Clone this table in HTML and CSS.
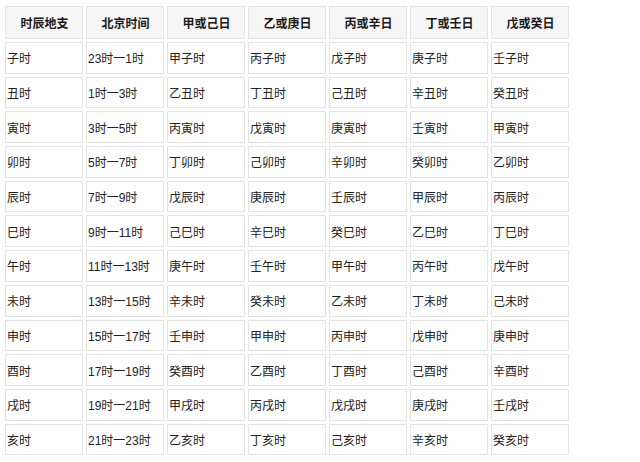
FILE: index.html
```html
<!DOCTYPE html>
<html lang="zh">
<head>
<meta charset="utf-8">
<title>时辰地支</title>
<link rel="stylesheet" href="styles.css">
</head>
<body>
<table class="chart">
<thead>
<tr><th>时辰地支</th><th>北京时间</th><th>甲或己日</th><th>乙或庚日</th><th>丙或辛日</th><th>丁或壬日</th><th>戊或癸日</th></tr>
</thead>
<tbody>
<tr><td>子时</td><td>23时一1时</td><td>甲子时</td><td>丙子时</td><td>戊子时</td><td>庚子时</td><td>壬子时</td></tr>
<tr><td>丑时</td><td>1时一3时</td><td>乙丑时</td><td>丁丑时</td><td>己丑时</td><td>辛丑时</td><td>癸丑时</td></tr>
<tr><td>寅时</td><td>3时一5时</td><td>丙寅时</td><td>戊寅时</td><td>庚寅时</td><td>壬寅时</td><td>甲寅时</td></tr>
<tr><td>卯时</td><td>5时一7时</td><td>丁卯时</td><td>己卯时</td><td>辛卯时</td><td>癸卯时</td><td>乙卯时</td></tr>
<tr><td>辰时</td><td>7时一9时</td><td>戊辰时</td><td>庚辰时</td><td>壬辰时</td><td>甲辰时</td><td>丙辰时</td></tr>
<tr><td>巳时</td><td>9时一11时</td><td>己巳时</td><td>辛巳时</td><td>癸巳时</td><td>乙巳时</td><td>丁巳时</td></tr>
<tr><td>午时</td><td>11时一13时</td><td>庚午时</td><td>壬午时</td><td>甲午时</td><td>丙午时</td><td>戊午时</td></tr>
<tr><td>未时</td><td>13时一15时</td><td>辛未时</td><td>癸未时</td><td>乙未时</td><td>丁未时</td><td>己未时</td></tr>
<tr><td>申时</td><td>15时一17时</td><td>壬申时</td><td>甲申时</td><td>丙申时</td><td>戊申时</td><td>庚申时</td></tr>
<tr><td>酉时</td><td>17时一19时</td><td>癸酉时</td><td>乙酉时</td><td>丁酉时</td><td>己酉时</td><td>辛酉时</td></tr>
<tr><td>戌时</td><td>19时一21时</td><td>甲戌时</td><td>丙戌时</td><td>戊戌时</td><td>庚戌时</td><td>壬戌时</td></tr>
<tr><td>亥时</td><td>21时一23时</td><td>乙亥时</td><td>丁亥时</td><td>己亥时</td><td>辛亥时</td><td>癸亥时</td></tr>
</tbody>
</table>
</body>
</html>
```
FILE: styles.css
```css
html, body {
  margin: 0;
  padding: 0;
  background: #ffffff;
}
.chart {
  margin: 3px 0 0 2px;
  border-collapse: separate;
  border-spacing: 3px;
  font-family: "Liberation Sans", "Noto Sans CJK SC", sans-serif;
  font-size: 12px;
  color: #222222;
  table-layout: fixed;
}
.chart th,
.chart td {
  box-sizing: border-box;
  width: 78px;
  border: 1px solid #e4e4e4;
  padding: 0 0 0 1px;
  vertical-align: middle;
  white-space: nowrap;
  overflow: hidden;
}
.chart th {
  height: 33px;
  background: #f6f6f6;
  font-weight: bold;
  text-align: center;
  color: #1a1a1a;
}
.chart td {
  height: 31.7px;
  text-align: left;
  background: #ffffff;
}
```
